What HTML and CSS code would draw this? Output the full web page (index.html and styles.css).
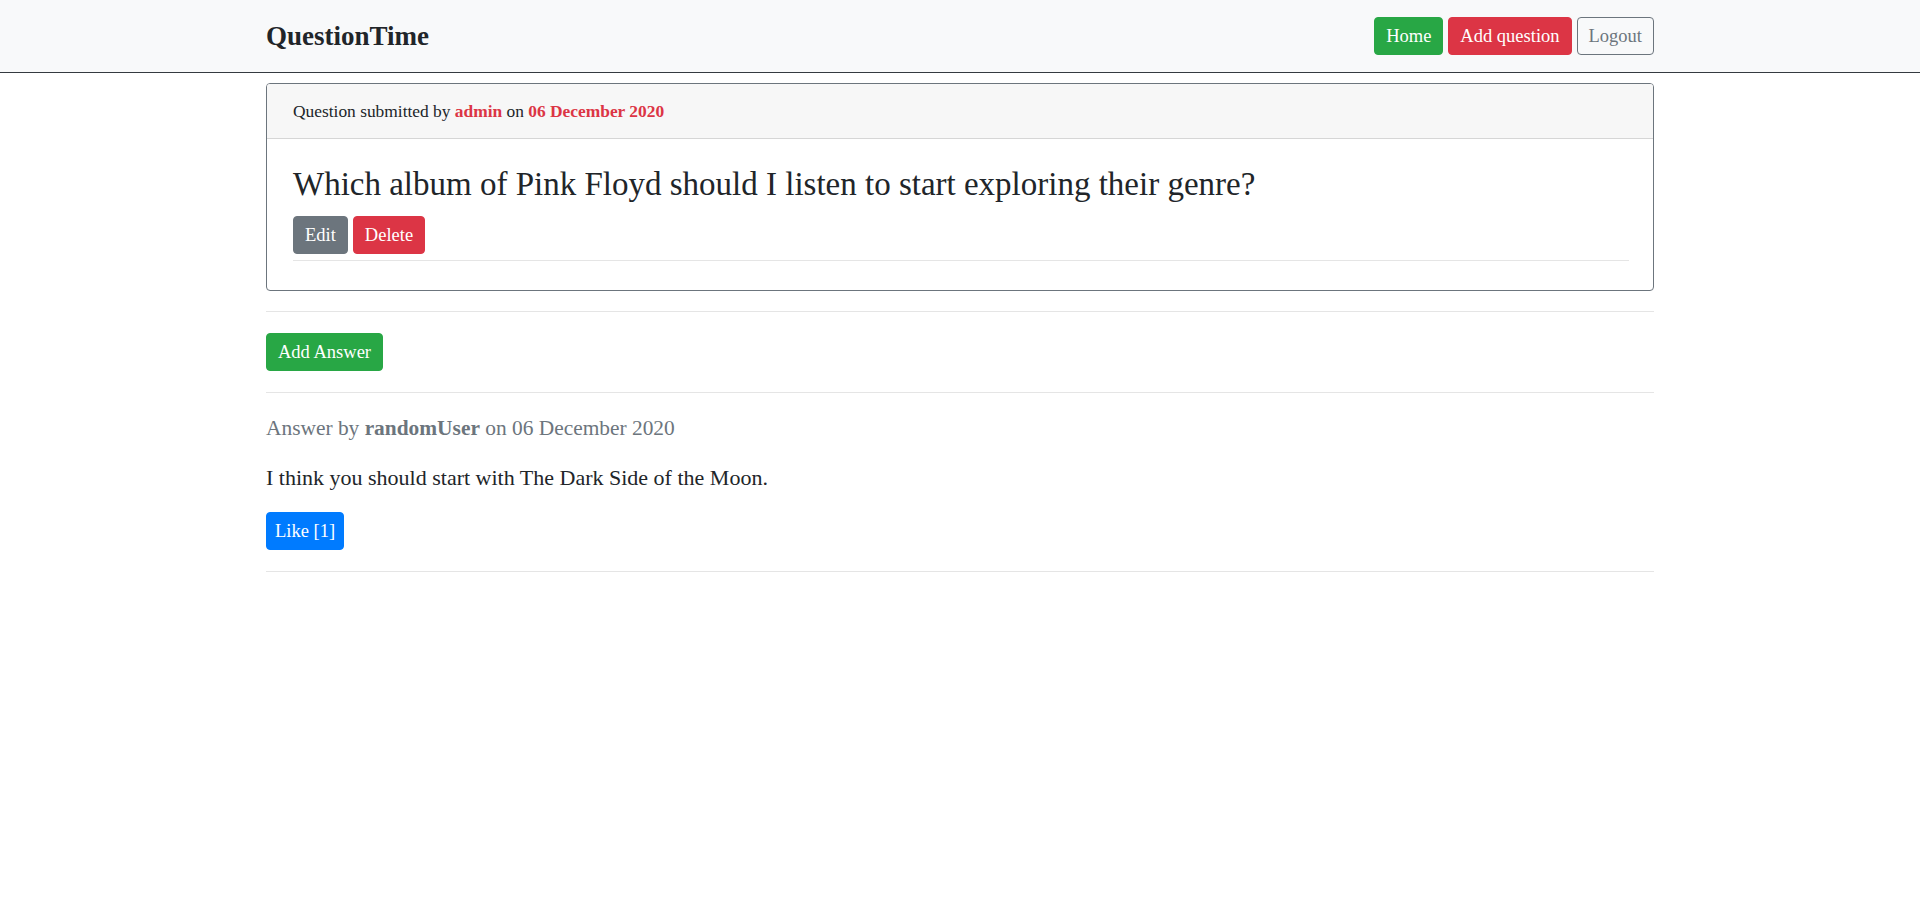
FILE: index.html
```html
<!DOCTYPE html>
<html lang="en">
<head>
<meta charset="utf-8">
<title>QuestionTime</title>
<link rel="stylesheet" href="styles.css">
</head>
<body>
<nav class="navbar">
  <div class="container nav-inner">
    <a class="brand" href="#">QuestionTime</a>
    <div class="nav-actions">
      <a class="btn btn-success" href="#">Home</a>
      <a class="btn btn-danger" href="#">Add question</a>
      <a class="btn btn-outline-secondary" href="#">Logout</a>
    </div>
  </div>
</nav>
<main class="container">
  <section class="card">
    <div class="card-header">Question submitted by <a class="hl" href="#">admin</a> on <span class="hl">06 December 2020</span></div>
    <div class="card-body">
      <h3 class="question">Which album of Pink Floyd should I listen to start exploring their genre?</h3>
      <div class="actions">
        <a class="btn btn-secondary" href="#">Edit</a>
        <a class="btn btn-danger" href="#">Delete</a>
      </div>
      <hr class="inner-rule">
    </div>
  </section>
  <hr class="rule rule-after-card">
  <div class="add-row"><a class="btn btn-success" href="#">Add Answer</a></div>
  <hr class="rule rule-after-add">
  <article class="answer">
    <p class="meta">Answer by <strong>randomUser</strong> on 06 December 2020</p>
    <p class="answer-text">I think you should start with The Dark Side of the Moon.</p>
    <div class="like-row"><a class="btn btn-primary btn-like" href="#">Like [1]</a></div>
  </article>
  <hr class="rule rule-end">
</main>
</body>
</html>
```

FILE: styles.css
```css
* { box-sizing: border-box; }
html, body { margin: 0; padding: 0; }
body {
  font-family: "Liberation Serif", "Times New Roman", serif;
  font-size: 16px;
  line-height: 24px;
  color: #212529;
  background: #fff;
}
a { text-decoration: none; }

.container {
  width: 1388px;
  margin: 0 auto;
}

.navbar {
  background: #f8f9fa;
  border-bottom: 1px solid #343a40;
  height: 73px;
}
.nav-inner {
  height: 72px;
  display: flex;
  align-items: center;
  justify-content: space-between;
}
.brand {
  color: #212529;
  font-size: 27px;
  font-weight: 700;
  line-height: 32px;
}
.nav-actions {
  display: flex;
  gap: 5px;
}

.btn {
  display: inline-block;
  height: 38px;
  padding: 6px 11px;
  font-size: 18.5px;
  line-height: 24px;
  border: 1px solid transparent;
  border-radius: 4px;
  color: #fff;
  white-space: nowrap;
}
.btn-success { background: #28a745; border-color: #28a745; }
.btn-danger { background: #dc3545; border-color: #dc3545; }
.btn-secondary { background: #6c757d; border-color: #6c757d; }
.btn-primary { background: #007bff; border-color: #007bff; }
.btn-outline-secondary { background: transparent; border-color: #6c757d; color: #6c757d; }
.btn-like { padding: 6px 8px; }

.card {
  margin-top: 10px;
  border: 1px solid #6c757d;
  border-radius: 4px;
  overflow: hidden;
}
.card-header {
  background: #f7f7f7;
  border-bottom: 1px solid #d6d6d6;
  padding: 15px 26px;
  font-size: 17.4px;
  line-height: 24px;
}
.hl { color: #dc3545; font-weight: 700; }

.card-body {
  padding: 27px 24px 29px 26px;
}
.question {
  margin: 0 0 14px;
  font-size: 33px;
  line-height: 36px;
  font-weight: 400;
}
.actions {
  display: flex;
  gap: 5px;
}
.inner-rule {
  margin: 6px 0 0;
  border: 0;
  border-top: 1px solid #e5e5e5;
}

.rule {
  margin: 0;
  border: 0;
  border-top: 1px solid #e5e5e5;
}
.rule-after-card { margin-top: 20px; }
.add-row { margin-top: 21px; }
.rule-after-add { margin-top: 21px; }

.answer { margin-top: 20px; }
.meta {
  margin: 0;
  color: #6c757d;
  font-size: 21.4px;
  line-height: 30px;
}
.meta strong { font-weight: 700; }
.answer-text {
  margin: 20px 0 0;
  font-size: 22px;
  line-height: 30px;
}
.like-row { margin-top: 19px; }
.rule-end { margin-top: 21px; }
```
